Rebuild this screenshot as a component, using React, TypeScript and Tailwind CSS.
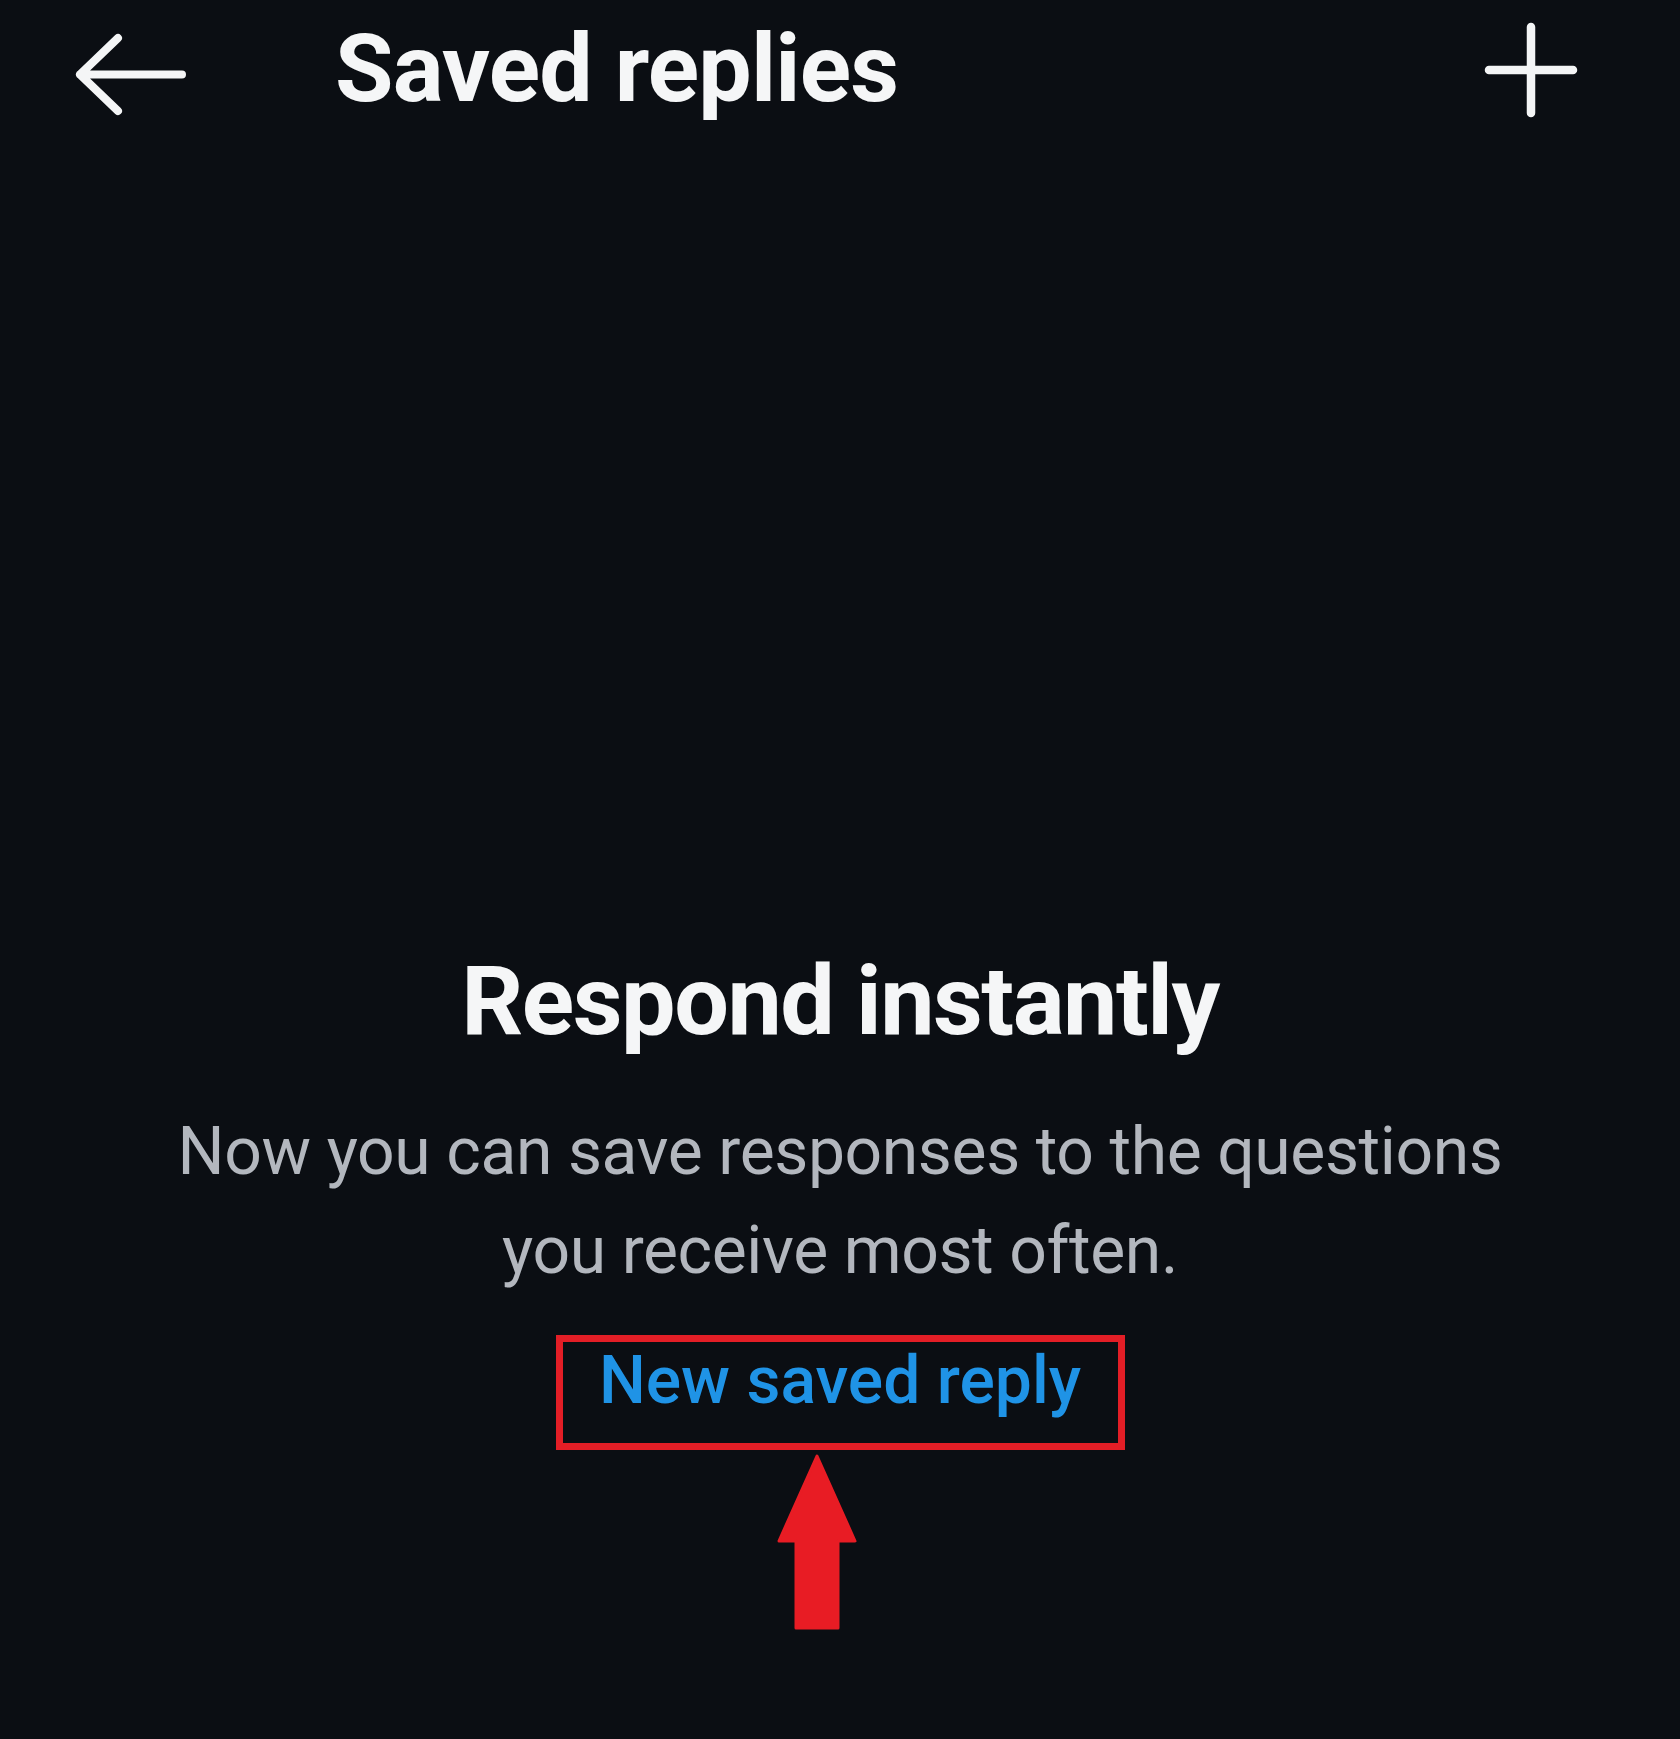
import React from 'react'

const BackArrow = () => (
    <svg width="112" height="84" viewBox="0 0 112 84" className="mt-[33px] ml-[75px] shrink-0">
        <path d="M5 41.5 L107 41.5 M43 5 L5 41.5 L43 78" fill="none" stroke="#f4f5f6" strokeWidth="8" strokeLinecap="round" strokeLinejoin="round" />
    </svg>
)

const Plus = () => (
    <svg width="100" height="100" viewBox="0 0 100 100" className="mt-[20px] ml-auto mr-[99px] shrink-0">
        <path d="M50 7 L50 93 M8 50 L92 50" fill="none" stroke="#f4f5f6" strokeWidth="8.5" strokeLinecap="round" />
    </svg>
)

const UpArrow = () => (
    <svg width="80" height="177" viewBox="0 0 80 177" className="mt-[3px] mr-[46px]">
        <path d="M40 3 L78 88 L61 88 L61 175 L19 175 L19 88 L2 88 Z" fill="#e81c24" stroke="#e81c24" strokeWidth="3" strokeLinejoin="round" />
    </svg>
)

const App: React.FC = () => {
    return (
        <div className="min-h-[1739px] w-full bg-[#0b0e13] font-['Roboto',sans-serif] flex flex-col">
            {/* top bar */}
            <div className="flex items-start h-[150px]">
                <BackArrow />
                <h1 className="ml-[148px] mt-[21px] text-[95px] leading-none font-bold text-[#f5f6f7] tracking-[-0.8px]">
                    Saved replies
                </h1>
                <Plus />
            </div>

            <div className="flex flex-col items-center mt-[803px]">
                <h2 className="text-[97px] leading-none font-bold text-[#f5f6f7] tracking-[-1.5px]">
                    Respond instantly
                </h2>
                <p className="mt-[52px] text-[66px] leading-[99px] text-[#b3b7be] text-center tracking-[-0.4px]">
                    Now you can save responses to the questions
                    <br />
                    you receive most often.
                </p>
                <div className="mt-[35px] w-[569px] h-[115px] border-[7px] border-[#e31e26] flex justify-center pt-[6px]">
                    <span className="text-[66px] leading-none font-medium text-[#1f93e6]">New saved reply</span>
                </div>
                <UpArrow />
            </div>
        </div>
    )
}

export default App
